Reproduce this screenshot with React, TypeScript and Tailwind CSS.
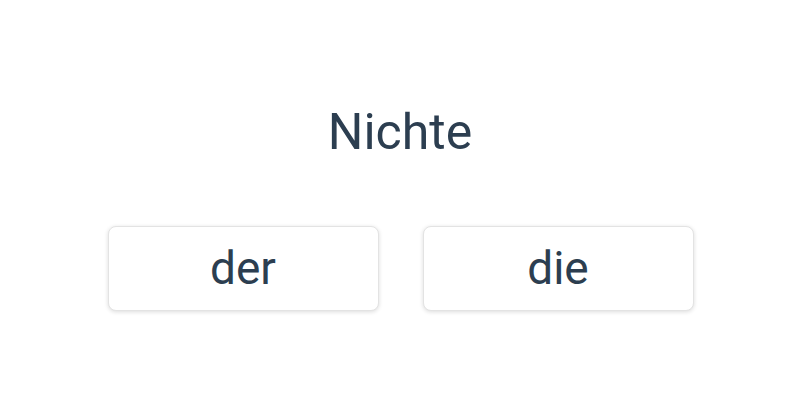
export default function App() {
  return (
    <div
      className="w-[800px] h-[400px] bg-white flex flex-col items-center"
      style={{ fontFamily: "Roboto, 'Liberation Sans', sans-serif" }}
    >
      <h1 className="mt-[102px] text-[50px] leading-[60px] text-[#2c3e50] font-normal">
        Nichte
      </h1>
      <div className="mt-[64px] ml-[1px] flex gap-[44px]">
        <button className="w-[271px] h-[85px] rounded-lg border border-[#e3e3e3] bg-white shadow-[0_1px_4px_rgba(0,0,0,0.14)] text-[46px] text-[#2c3e50]">
          der
        </button>
        <button className="w-[271px] h-[85px] rounded-lg border border-[#e3e3e3] bg-white shadow-[0_1px_4px_rgba(0,0,0,0.14)] text-[46px] text-[#2c3e50]">
          die
        </button>
      </div>
    </div>
  );
}
